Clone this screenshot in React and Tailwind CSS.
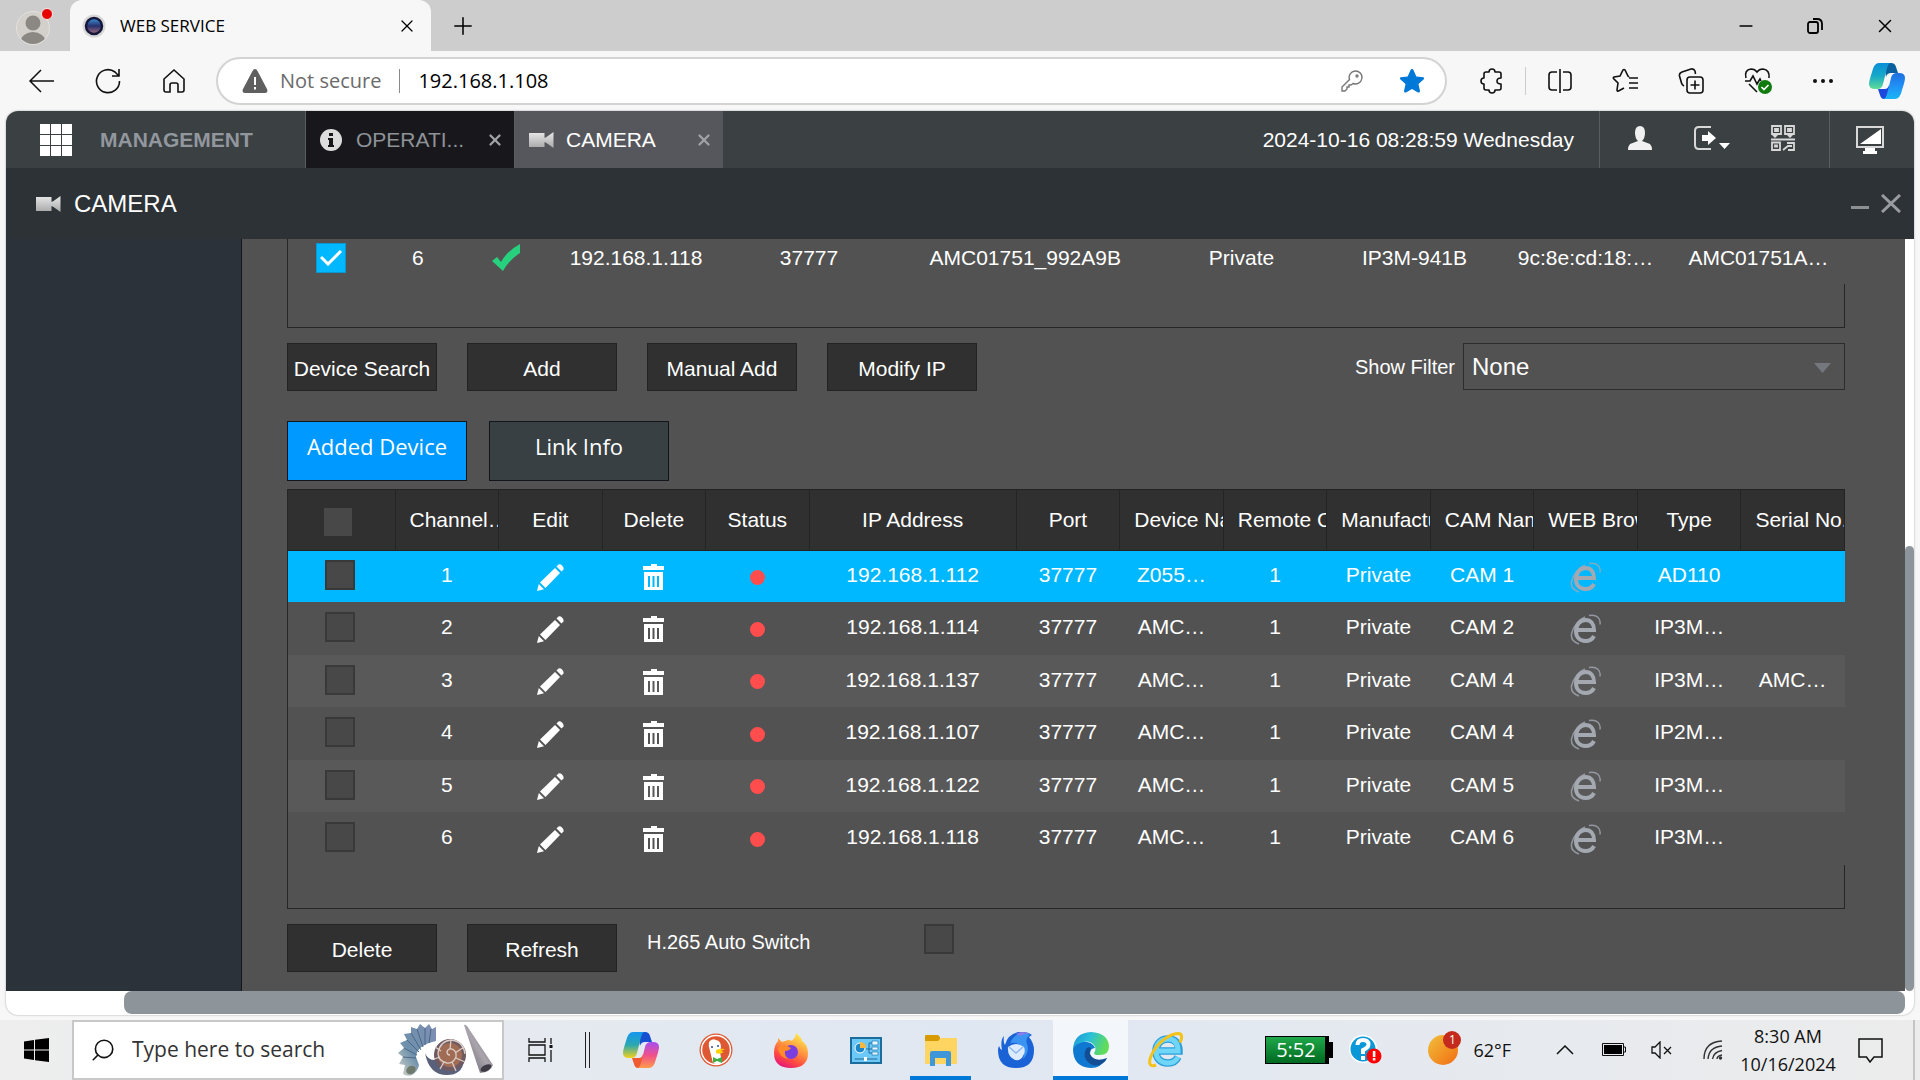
import { clsx } from 'clsx'
import { Plus, X, Minus, Search } from 'lucide-react'

const UI = 'font-["Open_Sans","Noto_Sans",sans-serif]'

const devices = [
  { no: 1, ip: '192.168.1.112', port: '37777', name: 'Z055…', remote: 1, maker: 'Private', cam: 'CAM 1', type: 'AD110', serial: '' },
  { no: 2, ip: '192.168.1.114', port: '37777', name: 'AMC…', remote: 1, maker: 'Private', cam: 'CAM 2', type: 'IP3M…', serial: '' },
  { no: 3, ip: '192.168.1.137', port: '37777', name: 'AMC…', remote: 1, maker: 'Private', cam: 'CAM 4', type: 'IP3M…', serial: 'AMC…' },
  { no: 4, ip: '192.168.1.107', port: '37777', name: 'AMC…', remote: 1, maker: 'Private', cam: 'CAM 4', type: 'IP2M…', serial: '' },
  { no: 5, ip: '192.168.1.122', port: '37777', name: 'AMC…', remote: 1, maker: 'Private', cam: 'CAM 5', type: 'IP3M…', serial: '' },
  { no: 6, ip: '192.168.1.118', port: '37777', name: 'AMC…', remote: 1, maker: 'Private', cam: 'CAM 6', type: 'IP3M…', serial: '' },
]

const headers = [
  'Channel…', 'Edit', 'Delete', 'Status', 'IP Address', 'Port', 'Device Name', 'Remote Ch',
  'Manufactu', 'CAM Name', 'WEB Brows', 'Type', 'Serial No.',
]

/* ---------- icons ---------- */

function CameraIcon() {
  return (
    <svg width="25" height="16" viewBox="0 0 25 16">
      <defs>
        <linearGradient id="cam" x1="0" y1="0" x2="0" y2="1">
          <stop offset="0" stopColor="#e8e8e8" />
          <stop offset="1" stopColor="#a8a8a8" />
        </linearGradient>
      </defs>
      <path fill="url(#cam)" d="M0 1h15.500v5l2-1 7-5v16l-7-5-2-1v5H0z" />
    </svg>
  )
}

function PencilIcon() {
  return (
    <svg width="27" height="27" viewBox="0 0 27 27" fill="#fff">
      <path d="M19.500 2.500 21.500.500Q23-.5 25 1.500t1.500 4l-2 2z" />
      <path d="m18 4 5 5L8.500 24 3 18.500z" />
      <path d="m1.800 20 5.200 5.300L0 27z" />
    </svg>
  )
}

function TrashIcon() {
  return (
    <svg width="22" height="26" viewBox="0 0 22 26" fill="#fff">
      <path d="M8 0h6v2h7v4H0V2h8z" />
      <path fillRule="evenodd" d="M1 8h19v18H1zm4 4v11h2V12zm4.500 0v11h2V12zm4.500 0v11h2V12z" />
    </svg>
  )
}

function BrowserIcon() {
  return (
    <svg width="32" height="31" viewBox="0 0 32 31" fill="none" stroke="#a3a8b1">
      <path strokeWidth="4" d="M7 16h17c0-6-3-10-8.500-10C10 6 6 11 6 17s3.500 10 9.500 10c4 0 7-2 8.500-5" />
      <path strokeWidth="1.500" opacity=".8" d="M9 30C3 28 1 24 1.500 20 3 12 10 5 15 3M19 1.500c8-1.500 12 3 11 9" />
    </svg>
  )
}

function CopilotIcon({ size, warm }) {
  const a = warm ? 'copA' : 'copC'
  const b = warm ? 'copB' : 'copD'
  return (
    <svg width={size} height={size} viewBox="0 0 36 36">
      <defs>
        <linearGradient id={a} x1="0" y1="0" x2="0" y2="1">
          <stop offset="0" stopColor={warm ? '#1496f0' : '#0a8fd8'} />
          <stop offset=".5" stopColor={warm ? '#2aa8b0' : '#16a9c8'} />
          <stop offset="1" stopColor={warm ? '#f6d21a' : '#5fdc96'} />
        </linearGradient>
        <linearGradient id={b} x1="0" y1="0" x2="0" y2="1">
          <stop offset="0" stopColor={warm ? '#a64ff0' : '#1f6fe0'} />
          <stop offset=".5" stopColor={warm ? '#ef4f8c' : '#2190f5'} />
          <stop offset="1" stopColor={warm ? '#ff9a4a' : '#19b5f5'} />
        </linearGradient>
      </defs>
      <path fill={warm ? '#1650d0' : '#0b5f9c'} d="M15 0h7q4 0 5 4l2 6h-7q-4 0-5 4z" />
      <path fill={warm ? '#f05a30' : '#1c49dc'} d="M9 26h7q3 0 4-4l1 10q-1 4-4 4h-2q-3 0-4-4z" />
      <path fill={`url(#${a})`} d="M10 0h11q-2 1-3 5l-4 16q-1 5-6 5H6q-6 0-6-5 0-3 3-12 2-9 7-9z" />
      <path fill={`url(#${b})`} d="M26 36H15q2-1 3-5l4-16q1-5 6-5h2q6 0 6 5 0 3-3 12-2 9-7 9z" />
    </svg>
  )
}

function TaskViewIcon() {
  return (
    <svg width="25" height="24" viewBox="0 0 25 24" fill="none" stroke="#111" strokeWidth="1.300">
      <path d="M1 0v4h16V0M1 24v-4h16v4M1 7h16v10H1zM23 0v6M23 12v12" />
      <path strokeWidth="3" d="M23 7v3" />
    </svg>
  )
}

function DuckIcon() {
  return (
    <svg width="34" height="34" viewBox="0 0 34 34">
      <circle cx="17" cy="17" r="16.500" fill="#de5833" />
      <circle cx="17" cy="17" r="14.500" fill="none" stroke="#fff" strokeWidth="1.500" />
      <path fill="#fff" d="M10 9q3-4 7-2 5 1 5 7l-1 5 2 11q-5 2-9 0l-3-12q-2-5-1-9z" />
      <circle cx="13" cy="14" r="1" fill="#2d4f8e" />
      <circle cx="19" cy="13" r="1" fill="#2d4f8e" />
      <path fill="#fdd20a" d="M17 17q5-2 9-1l-4 2 3 1q-5 3-8 1z" />
      <path fill="#3fae49" d="m14 24 4 2 5-2v6l-5-2-4 2z" />
    </svg>
  )
}

function FirefoxIcon() {
  return (
    <svg width="34" height="35" viewBox="0 0 34 35">
      <defs>
        <linearGradient id="fx" x1=".8" y1="0" x2=".3" y2="1">
          <stop offset="0" stopColor="#fff44f" />
          <stop offset=".45" stopColor="#ff9640" />
          <stop offset=".75" stopColor="#ff4a41" />
          <stop offset="1" stopColor="#e5177b" />
        </linearGradient>
      </defs>
      <path fill="url(#fx)" d="M22 0q6 5 6 8 6 4 6 12 0 15-17 15T0 20Q0 12 4 8V5l4 4 6-2q2-1 3 1 5-3 5-8z" />
      <circle cx="17" cy="19" r="7" fill="#7a3de0" />
      <path fill="#ff8a2a" d="M4 15q4-4 9-2l4 2q-2 3-6 3-1 5 4 8Q5 25 4 15z" />
    </svg>
  )
}

function ControlPanelIcon() {
  return (
    <svg width="32" height="27" viewBox="0 0 32 27">
      <path fill="#6cc8f7" stroke="#1c6d9c" strokeWidth="2" d="M1 1h30v25H1z" />
      <circle cx="10" cy="11" r="5" fill="#1f86c8" stroke="#fff" />
      <path fill="#f6b73c" d="M10 11V5q6 0 6 6z" />
      <path fill="none" stroke="#1c6d9c" d="M16 12h3V6h3m-3 6h3m-3 0v4h3" />
      <path fill="#e8f7ff" stroke="#2f86b8" strokeWidth=".8" d="M22 4h6v4h-6zm0 6h6v3h-6zm0 5h6v3h-6zM5 21.500h22v1H5z" />
      <path fill="#fff" d="M14 20h3v4h-3z" />
    </svg>
  )
}

function FolderIcon() {
  return (
    <svg width="32" height="31" viewBox="0 0 32 31">
      <path fill="#d99a00" d="M0 1q0-1 1-1h12l2 2v5H0z" />
      <path fill="#ffd562" d="M0 6h13l3-3h15q1 0 1 1v24q0 1-1 1H1q-1 0-1-1z" />
      <path fill="#3f96d8" d="M5 31V18q0-2 2-2h17q2 0 2 2v13h-5v-8H10v8z" />
    </svg>
  )
}

function ThunderbirdIcon() {
  return (
    <svg width="36" height="36" viewBox="0 0 36 36">
      <path fill="#1a63d6" d="M6 4q-1 6 1 9Q9 3 20 0q9-1 14 3l-3 2q5 6 5 13 0 18-18 18T0 18q0-2 1-4 1 3 3 4Q2 8 6 4z" />
      <path fill="#3b93f2" d="M12 12Q15 3 23 1q6-1 9 2-5 3-3 9 3 8-4 15 4-14-8-16-3-1-5 1z" />
      <path fill="#8e7be8" d="M18 2q6-4 14 0-7-1-9 2z" />
      <path fill="#dcebff" d="M10 15q8-6 16 0 2 5-1 9-2 5-8 4-8-4-7-13z" />
      <path fill="none" stroke="#8fb8ee" strokeWidth="1.500" d="m11 15 7 6 7-6" />
    </svg>
  )
}

function EdgeIcon() {
  return (
    <svg width="36" height="36" viewBox="0 0 36 36">
      <defs>
        <linearGradient id="edgeTop" x1="0" y1="0" x2="1" y2=".3">
          <stop offset="0" stopColor="#1a94d8" />
          <stop offset=".5" stopColor="#2bc0d8" />
          <stop offset="1" stopColor="#62dc5a" />
        </linearGradient>
      </defs>
      <path fill="#0f78d0" d="M1 14Q6 9 14 10q6 1 8 6-5 0-5 6 1 8 10 7 4 0 7-3-6 10-16 10Q0 35 0 17z" />
      <path fill="#134d94" d="M13 17q-4 8 3 14 7 5 14 0 3-2 4-5-10 4-15-1-4-4-1-9-3-2-5 1z" />
      <path fill="url(#edgeTop)" d="M0 17Q1 1 18 0q17 1 18 14 0 10-11 9-4 0-4-2 3-4 0-8-4-5-11-3-8 2-10 7z" />
    </svg>
  )
}

function ExplorerIcon() {
  return (
    <svg width="36" height="36" viewBox="0 0 36 36" fill="none">
      <path stroke="#2b9fd8" strokeWidth="7.500" d="M9 19h22c0-8-4-12-11-12S8 12 8 19s4 12 12 12c5 0 8-2 10-6" />
      <path stroke="#6fd6f8" strokeWidth="5" d="M9 19h21c0-8-3-12-10-12S8 12 8 19s4 12 12 12c5 0 8-2 10-6" />
      <path stroke="#f5c21a" strokeWidth="3" d="M8 33c-7 3-8-3-4-11C9 11 21 2 30 1.500c5 0 4 5 2 9" />
    </svg>
  )
}

function ShellsIcon() {
  return (
    <svg width="96" height="52" viewBox="0 0 96 52">
      <defs>
        <linearGradient id="shell" x1="1" y1="0" x2="0" y2="1">
          <stop offset="0" stopColor="#7f8fb4" />
          <stop offset=".6" stopColor="#6d90ab" />
          <stop offset="1" stopColor="#d8d6c8" />
        </linearGradient>
        <linearGradient id="cone" x1="0" y1="1" x2="1" y2="0">
          <stop offset="0" stopColor="#5b5662" />
          <stop offset=".5" stopColor="#aaa4ac" />
          <stop offset="1" stopColor="#55525a" />
        </linearGradient>
      </defs>
      <path
        fill="url(#shell)"
        d="M38 17V3l-4 2-3-5-4 4-5-4-3 5-6-2v6l-7 1 3 6-7 3 4 5-6 5 5 4-4 7 6 1-2 9q4 3 9 1 6-4 7-10l-3-8q1-12 20-16z"
      />
      <path stroke="#4d6688" fill="none" d="M33 5l-2 14M27 4l0 17M19 5l6 18M13 9l10 17M9 16l12 12M6 24l13 7M5 33l13 1" />
      <ellipse cx="13" cy="46" rx="5" ry="4" fill="#6f7a6c" transform="rotate(-35 13 46)" />
      <path fill="#59607a" d="M27 29q3 8 12 7 10-2 14-12 13 0 13 13-2 14-17 14-18 0-22-22z" />
      <circle cx="52" cy="31" r="16" fill="#6f5a62" />
      <circle cx="52" cy="31" r="12" fill="#a06c54" />
      <path
        fill="none"
        stroke="#dccdc8"
        strokeWidth="1.300"
        d="M52 31q-3 0-3-3 1-4 5-3 5 2 4 8-3 7-9 6-9-2-9-10 2-12 13-13 12 1 14 14M52 25l1-9M57 29l9-6M58 34l9 4M54 38l4 9M46 38l-4 7M42 33l-6 2M43 27l-6-4"
      />
      <path fill="url(#cone)" d="M66 1q2-1 5 4l24 36q-2 7-13 8z" />
      <ellipse cx="88" cy="44" rx="6" ry="3" fill="#3f3b45" transform="rotate(-28 88 44)" />
    </svg>
  )
}

/* ---------- browser chrome ---------- */

function TabStrip() {
  return (
    <div className="flex h-[51px] bg-[#cdcdcd] text-black">
      <button aria-label="Profile" className="relative flex w-[70px] shrink-0 items-center justify-center pt-1 pr-1">
        <svg width="34" height="34" viewBox="0 0 34 34">
          <defs>
            <clipPath id="face"><circle cx="17" cy="17" r="16" /></clipPath>
          </defs>
          <circle cx="17" cy="17" r="16.500" fill="#d3d0cb" stroke="#e4e2de" />
          <g fill="#8b8783" clipPath="url(#face)">
            <circle cx="17" cy="12" r="7.500" />
            <ellipse cx="17" cy="31" rx="12.500" ry="10" />
          </g>
        </svg>
        <span className="absolute top-2 left-[41px] size-[12px] rounded-full border border-[#eee] bg-[#e60000]" />
      </button>
      <div className="flex w-[361px] items-center rounded-t-xl bg-[#f7f7f7] pr-3.5 pl-3">
        <svg width="24" height="24" viewBox="0 0 24 24" className="shrink-0">
          <defs>
            <linearGradient id="lens" x1="0" y1="0" x2="0" y2="1">
              <stop offset="0" stopColor="#3c9be0" />
              <stop offset=".5" stopColor="#27306e" />
              <stop offset="1" stopColor="#a5707c" />
            </linearGradient>
          </defs>
          <circle cx="12" cy="12" r="11.500" fill="#d8d8d8" />
          <circle cx="12" cy="12" r="8" fill="url(#lens)" stroke="#15183a" strokeWidth="2.500" />
        </svg>
        <span className={clsx(UI, 'ml-3.5 flex-1 text-[17px]')}>WEB SERVICE</span>
        <button aria-label="Close tab"><X size={20} strokeWidth={1.5} /></button>
      </div>
      <button aria-label="New tab" className="ml-[18px]"><Plus size={28} strokeWidth={1.3} /></button>
      <div className="ml-auto flex items-center gap-[50px] pr-6">
        <button aria-label="Minimize"><Minus size={20} strokeWidth={2} /></button>
        <button aria-label="Restore">
          <svg width="18" height="18" viewBox="0 0 18 18" fill="none" stroke="#000" strokeWidth="1.800">
            <rect x="2" y="5" width="10" height="11" rx="2" />
            <path d="M7 2h4q5 0 5 5v6" />
          </svg>
        </button>
        <button aria-label="Close window"><X size={22} strokeWidth={1.6} /></button>
      </div>
    </div>
  )
}

function Toolbar() {
  return (
    <div className="flex h-[60px] items-center pr-[15px] pl-7 text-[#111]">
      <button aria-label="Back">
        <svg width="27" height="24" viewBox="0 0 27 24" fill="none" stroke="currentColor" strokeWidth="1.500">
          <path d="M26 12H2M13 1 2 12l11 11" />
        </svg>
      </button>
      <button aria-label="Reload" className="ml-10">
        <svg width="26" height="26" viewBox="0 0 26 26" fill="none" stroke="currentColor" strokeWidth="1.600">
          <path d="M24.500 13A11.500 11.500 0 1 1 20 4l3.500 3.500M24 1v7h-7" />
        </svg>
      </button>
      <button aria-label="Home" className="ml-10">
        <svg width="26" height="26" viewBox="0 0 26 26" fill="none" stroke="currentColor" strokeWidth="1.600">
          <path d="M3 11 13 2l10 9v11q0 2-2 2h-4v-7q0-2-2-2h-4q-2 0-2 2v7H5q-2 0-2-2z" />
        </svg>
      </button>
      <div className={clsx(UI, 'ml-[29px] flex h-12 flex-1 items-center rounded-full border-2 border-[#d3d3d3] bg-white pr-5 pl-6 text-xl')}>
        <svg width="26" height="24" viewBox="0 0 26 24">
          <path fill="#5f5f5f" d="M13 0q1.500 0 2.500 2l9.500 18q1.500 4-2 4H3q-3.500 0-2-4L10.500 2Q11.500 0 13 0z" />
          <path fill="#fff" d="M12 8h2v8h-2zm0 10h2v2.500h-2z" />
        </svg>
        <span className="ml-3 text-[#6b6b6b]">Not secure</span>
        <span className="mx-[18px] h-6 w-px bg-[#8a8a8a]" />
        <input aria-label="Address" defaultValue="192.168.1.108" className="min-w-0 flex-1 bg-transparent text-black outline-none" />
        <button aria-label="Saved passwords">
          <svg width="22" height="22" viewBox="0 0 22 22" fill="none" stroke="#777" strokeWidth="1.400">
            <path d="M14 1a6.500 6.500 0 1 1-2 12.500L10 15H8v2H6v2l-2 2H1v-4l7.500-7.500A6.500 6.500 0 0 1 14 1z" />
            <circle cx="16" cy="6" r="1" />
          </svg>
        </button>
        <button aria-label="Favorite" className="ml-9">
          <svg width="26" height="26" viewBox="0 0 26 26" fill="#0078d7">
            <path d="M13 1q1 0 1.500 1l2.800 6.500 7 .8q1.500.5.500 2L19.500 16l1.500 7q0 2-2 1.500l-6-3.500-6 3.500q-2 .5-2-1.500l1.500-7L1.200 11.300q-1-1.500.5-2l7-.8L11.500 2Q12 1 13 1z" />
          </svg>
        </button>
      </div>
      <div className="ml-8 flex items-center gap-[39px]">
        <button aria-label="Extensions">
          <svg width="25" height="26" viewBox="0 0 25 26" fill="none" stroke="currentColor" strokeWidth="1.600" strokeLinejoin="round">
            <path d="M10 4q0-3 3-3t3 3h4q2 0 2 2v4q-4 0-4 3t4 3v4q0 2-2 2h-4q0 3-3 3t-3-3H7q-2 0-2-2v-4q-3 0-3-3t3-3V6q0-2 2-2z" />
          </svg>
        </button>
        <span className="-mx-[18px] h-7 w-px bg-[#ccc]" />
        <button aria-label="Split screen">
          <svg width="26" height="26" viewBox="0 0 26 26" fill="none" stroke="currentColor" strokeWidth="1.600">
            <path d="M10 4H5Q2 4 2 7v12q0 3 3 3h5M16 4h5q3 0 3 3v12q0 3-3 3h-5M13 1v24" />
          </svg>
        </button>
        <button aria-label="Favorites">
          <svg width="27" height="26" viewBox="0 0 27 26" fill="none" stroke="currentColor" strokeWidth="1.600">
            <path d="m17 9-1-1-3-6q-1-1-2 0L8 8l-6 1q-1 .5-.5 1.500L6 15l-1 7q0 1.500 1.500 1L12 20M17 10h9M17 15h9M17 20h9" />
          </svg>
        </button>
        <button aria-label="Collections">
          <svg width="27" height="26" viewBox="0 0 27 26" fill="none" stroke="currentColor" strokeWidth="1.600">
            <rect x="9" y="9" width="16" height="16" rx="3" />
            <path d="M17 12.500v9M12.500 17h9M6 18q-2-1-2.500-3L1.500 8Q1 5 4 4l9-3q3-.5 4 2l.5 3" />
          </svg>
        </button>
        <button aria-label="Browser essentials">
          <svg width="29" height="28" viewBox="0 0 29 28" fill="none" stroke="currentColor" strokeWidth="1.600">
            <path d="M2 11Q0 3 7 2q4 0 6 3 2-3 6-3 7 1 6 9M1 14h5l3-5 4 8 3-5 1 2M5 17l8 8" />
            <circle cx="21" cy="20" r="7" fill="#107c10" stroke="none" />
            <path stroke="#fff" d="m17.500 20 2.500 2.500 4.500-4.500" />
          </svg>
        </button>
        <button aria-label="Settings and more">
          <svg width="22" height="6" viewBox="0 0 22 6" fill="currentColor">
            <circle cx="3" cy="3" r="2" /><circle cx="11" cy="3" r="2" /><circle cx="19" cy="3" r="2" />
          </svg>
        </button>
        <button aria-label="Copilot" className="-ml-1"><CopilotIcon size={36} /></button>
      </div>
    </div>
  )
}

/* ---------- camera web page ---------- */

function AppBar() {
  return (
    <header className="flex h-[57px] items-center bg-[#3b4043] text-[21px] text-white">
      <button aria-label="Menu" className="ml-[34px] grid grid-cols-3 gap-px">
        {Array.from({ length: 9 }, (_, i) => <span key={i} className="size-[10px] bg-white" />)}
      </button>
      <span className="ml-7 w-[205px] font-bold text-[#92979d]">MANAGEMENT</span>
      <div className="flex h-full w-[210px] items-center border-x border-[#5b5e61] bg-[#18181c] pr-2.5 pl-3.5 text-[#8f9398]">
        <svg width="22" height="22" viewBox="0 0 22 22">
          <circle cx="11" cy="11" r="11" fill="#dcdcdc" />
          <path fill="#18181c" d="M9 4h4v3H9zM8 9h5v7h1v2H8v-2h1v-5H8z" />
        </svg>
        <span className="ml-3.5 flex-1">OPERATI...</span>
        <button aria-label="Close OPERATION"><X size={18} strokeWidth={3} color="#a0a3a6" /></button>
      </div>
      <div className="flex h-full w-[208px] items-center bg-[#56575d] pr-2.5 pl-3.5">
        <CameraIcon />
        <span className="ml-3 flex-1">CAMERA</span>
        <button aria-label="Close CAMERA"><X size={18} strokeWidth={3} color="#a0a3a6" /></button>
      </div>
      <span className="ml-auto pr-[25px]">2024-10-16 08:28:59 Wednesday</span>
      <div className="flex h-full w-[230px] items-center justify-between border-l border-[#5b5e61] pr-[34px] pb-1 pl-7">
        <button aria-label="User">
          <svg width="24" height="24" viewBox="0 0 24 24" fill="#f0f0f0">
            <path d="M12 0q5 0 5 7 0 5-3 8l8 3q2 2 2 6H0q0-4 2-6l8-3q-3-3-3-8 0-7 5-7z" />
          </svg>
        </button>
        <button aria-label="Log out">
          <svg width="36" height="24" viewBox="0 0 36 24">
            <path fill="none" stroke="#d8d8d8" strokeWidth="2" d="M17 1H5Q1 1 1 5v14q0 4 4 4h12" />
            <path fill="#fff" d="M8 9h6V5l8 7-8 7v-4H8zM25 17h11l-5.500 6z" />
          </svg>
        </button>
        <button aria-label="QR code">
          <svg width="24" height="26" viewBox="0 0 24 26" fill="none" stroke="#d8d8d8" strokeWidth="1.800">
            <path d="M1 1h9v8H1zM14 1h9v8h-9zM0 14.500h24M1 17.500h8V25H1zM16 18h7v7h-6M12 25l5-4h4" />
            <path d="M4 4h3v2H4zM17 4h3v2h-3zM4 20.500h2v1H4z" />
            <path fill="#d8d8d8" stroke="none" d="M1 10h6l-3 3zM16 10h6l-3 3z" />
          </svg>
        </button>
      </div>
      <button aria-label="Monitor" className="flex h-full w-[85px] items-center justify-center border-l border-[#5b5e61] pr-1">
        <svg width="28" height="28" viewBox="0 0 28 28">
          <path fill="none" stroke="#d8d8d8" strokeWidth="2" d="M1 1h26v20H1z" />
          <path fill="#fff" d="M25 3v15H4zM9 22h10v3h2v3H7v-3h2z" />
        </svg>
      </button>
    </header>
  )
}

function DarkButton({ children }) {
  return (
    <button className="h-12 w-[150px] border border-[#232323] bg-[#303030] pt-1 text-[21px] whitespace-nowrap">
      {children}
    </button>
  )
}

function CheckBox({ label, className }) {
  return (
    <input
      type="checkbox"
      aria-label={label}
      className={clsx('block size-[30px] appearance-none border-2 border-[#393939] bg-[#484848]', className)}
    />
  )
}

function SearchResults() {
  return (
    <div className="h-[89px] border-b border-l border-[#262626]">
      <table className="w-full table-fixed text-center">
        <colgroup><col span={18} /></colgroup>
        <tbody>
          <tr className="h-[45px] *:p-0 *:pb-2">
            <td>
              <label className="mx-auto flex size-[30px] items-center justify-center border border-[#0a97d0] bg-[#00b8ff]">
                <input type="checkbox" defaultChecked aria-label="Select device 6" className="sr-only" />
                <svg width="22" height="16" viewBox="0 0 22 16" fill="none" stroke="#fff" strokeWidth="3">
                  <path d="m1 7 7 7L21 1" />
                </svg>
              </label>
            </td>
            <td>6</td>
            <td className="pl-1!">
              <svg width="28" height="27" viewBox="0 0 28 27" className="mx-auto">
                <path fill="#26d07c" d="M0 17 5 13l4 5Q15 7 28 0v9Q17 16 11 27z" />
              </svg>
            </td>
            <td colSpan={2} className="pl-1!">192.168.1.118</td>
            <td colSpan={2} className="pl-1!">37777</td>
            <td colSpan={3} className="pl-1!">AMC01751_992A9B</td>
            <td colSpan={2} className="pl-1!">Private</td>
            <td colSpan={2} className="pl-1!">IP3M-941B</td>
            <td colSpan={2}>9c:8e:cd:18:…</td>
            <td colSpan={2}>AMC01751A…</td>
          </tr>
        </tbody>
      </table>
      <div className="h-[43px] border-r border-[#262626]" />
    </div>
  )
}

function DeviceTable() {
  return (
    <div className="border-b border-l border-[#262626]">
      <table className="w-full table-fixed border-collapse text-center">
        <colgroup>
          <col className="w-[107px]" />
          <col span={14} />
        </colgroup>
        <thead>
          <tr className="h-[61px] border-y border-[#222] bg-[#303030]">
            <th className="border-r border-[#242424] p-0 pt-1 pr-1.5">
              <CheckBox label="Select all" className="mx-auto size-7! border-[#484848]!" />
            </th>
            {headers.map(h => (
              <th key={h} colSpan={h === 'IP Address' ? 2 : 1} className="border-r border-[#242424] p-0 font-normal">
                <div className="overflow-hidden px-3.5 whitespace-nowrap">{h}</div>
              </th>
            ))}
          </tr>
        </thead>
        <tbody>
          {devices.map((d, i) => (
            <tr
              key={d.no}
              className={clsx(
                'even:h-[53px] *:p-0 *:pb-0.5',
                i === 0 ? 'h-[51px] bg-[#00b8ff]' : 'odd:h-[52px] odd:bg-[#595959]',
              )}
            >
              <td className="pr-1!"><CheckBox label={`Select channel ${d.no}`} className="mx-auto" /></td>
              <td>{d.no}</td>
              <td className="pt-1!"><button aria-label="Edit" className="mx-auto block"><PencilIcon /></button></td>
              <td className="pt-1!"><button aria-label="Delete" className="mx-auto block"><TrashIcon /></button></td>
              <td className="pt-1!"><span className="mx-auto block size-[15px] rounded-full bg-[#ff4d4d]" /></td>
              <td colSpan={2}>{d.ip}</td>
              <td>{d.port}</td>
              <td>{d.name}</td>
              <td>{d.remote}</td>
              <td>{d.maker}</td>
              <td>{d.cam}</td>
              <td className="pt-1!"><button aria-label="Open in browser" className="mx-auto block"><BrowserIcon /></button></td>
              <td>{d.type}</td>
              <td>{d.serial}</td>
            </tr>
          ))}
        </tbody>
      </table>
      <div className="h-[43px] border-r border-[#262626]" />
    </div>
  )
}

function CameraPage() {
  return (
    <main className="min-w-0 flex-1 border-l border-[#14171a] bg-[#525252] pr-[60px] pb-[19px] pl-[45px]">
      <SearchResults />
      <div className="mt-[15px] flex items-start gap-[30px]">
        <DarkButton>Device Search</DarkButton>
        <DarkButton>Add</DarkButton>
        <DarkButton>Manual Add</DarkButton>
        <DarkButton>Modify IP</DarkButton>
        <div className="ml-auto flex items-center">
          <label htmlFor="filter" className="mr-2 text-xl">Show Filter</label>
          <div className="relative">
            <select id="filter" className="h-[47px] w-[382px] appearance-none border border-[#2c2c2c] bg-transparent px-2 text-2xl">
              <option>None</option>
            </select>
            <svg width="17" height="10" viewBox="0 0 17 10" className="pointer-events-none absolute top-5 right-3.5">
              <path fill="#74777d" d="M0 0h17L8.500 10z" />
            </svg>
          </div>
        </div>
      </div>
      <div className={clsx(UI, 'mt-[30px] mb-2 flex gap-[22px] text-[22px] *:h-[60px] *:w-[180px] *:border *:border-[#12161a] *:pb-2.5')}>
        <button className="bg-[#0099ff]">Added Device</button>
        <button className="bg-[#384044]">Link Info</button>
      </div>
      <DeviceTable />
      <div className="mt-[15px] flex items-start gap-[30px]">
        <DarkButton>Delete</DarkButton>
        <DarkButton>Refresh</DarkButton>
        <label htmlFor="h265" className="w-[247px] pt-1 text-xl">H.265 Auto Switch</label>
        <input id="h265" type="checkbox" className="size-[30px] appearance-none border-2 border-[#393939] bg-[#484848]" />
      </div>
    </main>
  )
}

/* ---------- taskbar ---------- */

const pinned = [
  { name: 'Copilot', icon: <CopilotIcon size={36} warm /> },
  { name: 'DuckDuckGo', icon: <DuckIcon /> },
  { name: 'Firefox', icon: <FirefoxIcon /> },
  { name: 'Control Panel', icon: <ControlPanelIcon /> },
  { name: 'File Explorer', icon: <FolderIcon />, running: true },
  { name: 'Thunderbird', icon: <ThunderbirdIcon /> },
  { name: 'Edge', icon: <EdgeIcon />, running: true, active: true },
  { name: 'Internet Explorer', icon: <ExplorerIcon /> },
]

function Taskbar() {
  return (
    <footer className={clsx(UI, 'flex h-[60px] items-center bg-linear-to-r from-[#eeeeee] via-[#dfe7f2] to-[#ececec] text-[#111]')}>
      <button aria-label="Start" className="flex w-[72px] justify-center">
        <svg width="25" height="24" viewBox="0 0 25 24">
          <path d="M0 3.500 10 2v9.500H0zM11 1.800 25 0v11.500H11zM0 12.500h10V22L0 20.500zM11 12.500h14V24l-14-1.800z" />
        </svg>
      </button>
      <div className="flex h-full w-[432px] items-center border-2 border-[#c8c8c8] bg-white pr-2 pl-4">
        <Search size={26} strokeWidth={1.5} className="-scale-x-100" />
        <input aria-label="Search" placeholder="Type here to search" className="ml-4 min-w-0 flex-1 text-[21px] outline-none placeholder:text-[#333]" />
        <ShellsIcon />
      </div>
      <button aria-label="Task view" className="flex w-[72px] justify-center"><TaskViewIcon /></button>
      <span className="mr-[13px] ml-[9px] h-9 w-[5px] border-x border-[#222]" />
      <div className="flex h-full">
        {pinned.map(({ name, icon, running, active }) => (
          <button
            key={name}
            aria-label={name}
            className={clsx(
              'flex h-full items-center justify-center border-b-4 pt-1',
              active ? 'w-[75px] bg-[#f3f6fa]' : 'mx-[7px] w-[61px]',
              running ? 'border-[#0078d7]' : 'border-transparent',
            )}
          >
            {icon}
          </button>
        ))}
      </div>
      <div className="ml-auto flex h-full items-center pr-[5px]">
        <span className="flex h-7 w-16 items-center justify-center border border-r-4 border-black bg-linear-to-b from-[#1fa84a] to-[#006a20] text-xl text-white">5:52</span>
        <span className="h-4 w-1 bg-black" />
        <svg width="34" height="32" viewBox="0 0 34 32" className="ml-4">
          <circle cx="14" cy="15" r="14" fill="#fff" />
          <circle cx="14" cy="15" r="12.500" fill="#0a98d8" />
          <path fill="none" stroke="#fff" strokeWidth="4" d="M8.500 11q0-5 5.500-5t5.500 4.500q0 3-5.500 5.500v4M14 22v4" />
          <circle cx="25" cy="22" r="7.500" fill="#f00" />
          <path fill="#fff" d="M23.800 17h2.600v6h-2.600zm0 7h2.600v2.500h-2.600z" />
        </svg>
        <div className="relative ml-[45px]">
          <div className="size-[30px] rounded-full bg-linear-to-br from-[#efbf3a] to-[#f06a10]" />
          <span className="absolute -top-1 left-[15px] flex size-[18px] items-center justify-center rounded-full bg-[#c42b1c] text-xs text-white">1</span>
        </div>
        <span className="ml-[15px] text-lg">62°F</span>
        <svg width="18" height="10" viewBox="0 0 18 10" className="ml-[45px]" fill="none" stroke="#111" strokeWidth="1.500">
          <path d="m1 9 8-8 8 8" />
        </svg>
        <svg width="24" height="14" viewBox="0 0 24 14" className="ml-7">
          <path fill="none" stroke="#111" d="M.5.500h21v12H.500zM22 4h1.500v5H22" />
          <path d="M2 2h18v9H2z" />
        </svg>
        <svg width="22" height="18" viewBox="0 0 22 18" className="ml-[25px]" fill="none" stroke="#111" strokeWidth="1.300">
          <path d="M1 6h3l5-5v16l-5-5H1zM13 6l7 7M20 6l-7 7" />
        </svg>
        <svg width="20" height="20" viewBox="0 0 20 20" className="ml-[30px]" fill="none" stroke="#333" strokeWidth="1.400">
          <path d="M1 19Q1 2 19 1M5 19Q6 7 19 6M9.500 19q1-7 9.500-8.500M14 19q0-3 5-4" />
          <circle cx="17.500" cy="18" r="1" fill="#111" />
        </svg>
        <div className="ml-[15px] w-[100px] text-center text-lg leading-7">
          <div>8:30 AM</div>
          <div>10/16/2024</div>
        </div>
        <svg width="25" height="25" viewBox="0 0 25 25" className="ml-5" fill="none" stroke="#111" strokeWidth="1.500">
          <path d="M1 1h23v18h-8l-4 5-3.500-5H1z" />
        </svg>
        <span className="ml-[30px] h-full w-0.5 bg-[#c4c4c4]" />
      </div>
    </footer>
  )
}

export default function App() {
  return (
    <div className="flex min-h-screen flex-col bg-[#f7f7f7]">
      <TabStrip />
      <Toolbar />
      <div className='mx-1.5 mb-[5px] flex-1 overflow-hidden rounded-xl bg-white font-["Liberation_Sans",Arial,sans-serif] text-[21px] leading-7 text-white shadow-[0_0_2px_#999]'>
        <AppBar />
        <div className="flex h-[71px] items-center bg-[#2d3236] pr-[13px] pl-[30px]">
          <CameraIcon />
          <h1 className="ml-[13px] flex-1 text-2xl">CAMERA</h1>
          <button aria-label="Minimize panel" className="mt-2 mr-3"><span className="block h-[3px] w-[18px] bg-[#8d9092]" /></button>
          <button aria-label="Close panel">
            <svg width="20" height="19" viewBox="0 0 20 19" stroke="#9a9d9f" strokeWidth="3">
              <path d="m1 1 18 17M19 1 1 18" />
            </svg>
          </button>
        </div>
        <div className="flex">
          <nav className="w-[235px] shrink-0 bg-[#2b323a]" />
          <CameraPage />
          <div className="flex w-[9px] flex-col bg-white">
            <span className="mt-[307px] flex-1 rounded-full bg-[#8d949a]" />
          </div>
        </div>
        <div className="mr-[9px] ml-[118px] h-[23px] rounded-lg bg-[#8d949a]" />
      </div>
      <Taskbar />
    </div>
  )
}
